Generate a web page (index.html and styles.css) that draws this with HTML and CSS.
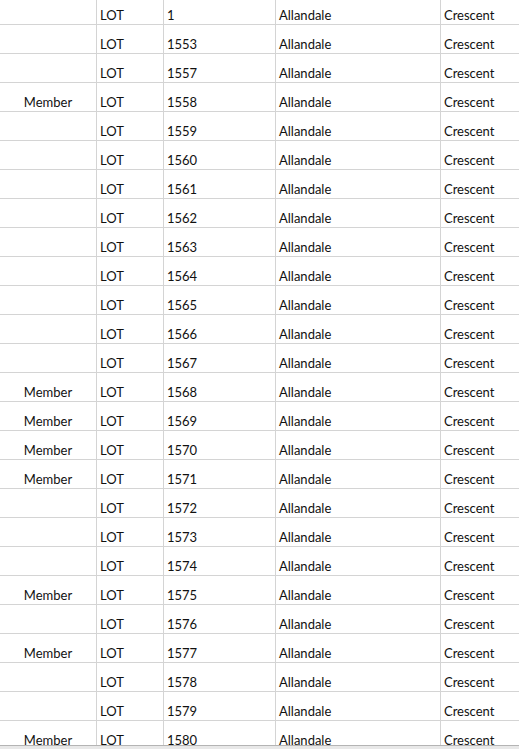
FILE: index.html
```html
<!DOCTYPE html>
<html>
<head>
<meta charset="utf-8">
<link rel="stylesheet" href="styles.css">
</head>
<body>
<div class="sheet">
  <div class="grid">
    <div class="row"><div class="c c1"></div><div class="c c2">LOT</div><div class="c c3">1</div><div class="c c4">Allandale</div><div class="c c5">Crescent</div></div>
    <div class="row"><div class="c c1"></div><div class="c c2">LOT</div><div class="c c3">1553</div><div class="c c4">Allandale</div><div class="c c5">Crescent</div></div>
    <div class="row"><div class="c c1"></div><div class="c c2">LOT</div><div class="c c3">1557</div><div class="c c4">Allandale</div><div class="c c5">Crescent</div></div>
    <div class="row"><div class="c c1">Member</div><div class="c c2">LOT</div><div class="c c3">1558</div><div class="c c4">Allandale</div><div class="c c5">Crescent</div></div>
    <div class="row"><div class="c c1"></div><div class="c c2">LOT</div><div class="c c3">1559</div><div class="c c4">Allandale</div><div class="c c5">Crescent</div></div>
    <div class="row"><div class="c c1"></div><div class="c c2">LOT</div><div class="c c3">1560</div><div class="c c4">Allandale</div><div class="c c5">Crescent</div></div>
    <div class="row"><div class="c c1"></div><div class="c c2">LOT</div><div class="c c3">1561</div><div class="c c4">Allandale</div><div class="c c5">Crescent</div></div>
    <div class="row"><div class="c c1"></div><div class="c c2">LOT</div><div class="c c3">1562</div><div class="c c4">Allandale</div><div class="c c5">Crescent</div></div>
    <div class="row"><div class="c c1"></div><div class="c c2">LOT</div><div class="c c3">1563</div><div class="c c4">Allandale</div><div class="c c5">Crescent</div></div>
    <div class="row"><div class="c c1"></div><div class="c c2">LOT</div><div class="c c3">1564</div><div class="c c4">Allandale</div><div class="c c5">Crescent</div></div>
    <div class="row"><div class="c c1"></div><div class="c c2">LOT</div><div class="c c3">1565</div><div class="c c4">Allandale</div><div class="c c5">Crescent</div></div>
    <div class="row"><div class="c c1"></div><div class="c c2">LOT</div><div class="c c3">1566</div><div class="c c4">Allandale</div><div class="c c5">Crescent</div></div>
    <div class="row"><div class="c c1"></div><div class="c c2">LOT</div><div class="c c3">1567</div><div class="c c4">Allandale</div><div class="c c5">Crescent</div></div>
    <div class="row"><div class="c c1">Member</div><div class="c c2">LOT</div><div class="c c3">1568</div><div class="c c4">Allandale</div><div class="c c5">Crescent</div></div>
    <div class="row"><div class="c c1">Member</div><div class="c c2">LOT</div><div class="c c3">1569</div><div class="c c4">Allandale</div><div class="c c5">Crescent</div></div>
    <div class="row"><div class="c c1">Member</div><div class="c c2">LOT</div><div class="c c3">1570</div><div class="c c4">Allandale</div><div class="c c5">Crescent</div></div>
    <div class="row"><div class="c c1">Member</div><div class="c c2">LOT</div><div class="c c3">1571</div><div class="c c4">Allandale</div><div class="c c5">Crescent</div></div>
    <div class="row"><div class="c c1"></div><div class="c c2">LOT</div><div class="c c3">1572</div><div class="c c4">Allandale</div><div class="c c5">Crescent</div></div>
    <div class="row"><div class="c c1"></div><div class="c c2">LOT</div><div class="c c3">1573</div><div class="c c4">Allandale</div><div class="c c5">Crescent</div></div>
    <div class="row"><div class="c c1"></div><div class="c c2">LOT</div><div class="c c3">1574</div><div class="c c4">Allandale</div><div class="c c5">Crescent</div></div>
    <div class="row"><div class="c c1">Member</div><div class="c c2">LOT</div><div class="c c3">1575</div><div class="c c4">Allandale</div><div class="c c5">Crescent</div></div>
    <div class="row"><div class="c c1"></div><div class="c c2">LOT</div><div class="c c3">1576</div><div class="c c4">Allandale</div><div class="c c5">Crescent</div></div>
    <div class="row"><div class="c c1">Member</div><div class="c c2">LOT</div><div class="c c3">1577</div><div class="c c4">Allandale</div><div class="c c5">Crescent</div></div>
    <div class="row"><div class="c c1"></div><div class="c c2">LOT</div><div class="c c3">1578</div><div class="c c4">Allandale</div><div class="c c5">Crescent</div></div>
    <div class="row"><div class="c c1"></div><div class="c c2">LOT</div><div class="c c3">1579</div><div class="c c4">Allandale</div><div class="c c5">Crescent</div></div>
    <div class="row"><div class="c c1">Member</div><div class="c c2">LOT</div><div class="c c3">1580</div><div class="c c4">Allandale</div><div class="c c5">Crescent</div></div>
  </div>
  <div class="edge"></div>
</div>
</body>
</html>
```
FILE: styles.css
```css
html, body {
  margin: 0;
  padding: 0;
  background: #ffffff;
}
body {
  font-family: "Lato", "Liberation Sans", sans-serif;
  font-size: 13px;
  color: #111111;
  overflow: hidden;
}
.sheet {
  width: 519px;
  height: 749px;
  display: flex;
  flex-direction: column;
  overflow: hidden;
}
.grid {
  flex: 1;
  overflow: hidden;
  display: flex;
  flex-direction: column;
}
.row {
  flex: none;
  display: grid;
  grid-template-columns: 97px 67px 112px 165px 1fr;
  height: 29px;
  box-sizing: border-box;
  border-bottom: 1px solid #d4d4d4;
}
.row:first-child {
  height: 25px;
}
.c {
  display: flex;
  align-items: flex-end;
  padding: 0 0 1px 3px;
  line-height: 16px;
  border-right: 1px solid #d4d4d4;
  white-space: nowrap;
  overflow: hidden;
}
.c1 {
  justify-content: center;
  padding-left: 0;
}
.c5 {
  border-right: none;
}
.edge {
  flex: none;
  height: 4px;
  box-sizing: border-box;
  border-top: 1px solid #b4b4b4;
  background: #e8e8e8;
}
```
